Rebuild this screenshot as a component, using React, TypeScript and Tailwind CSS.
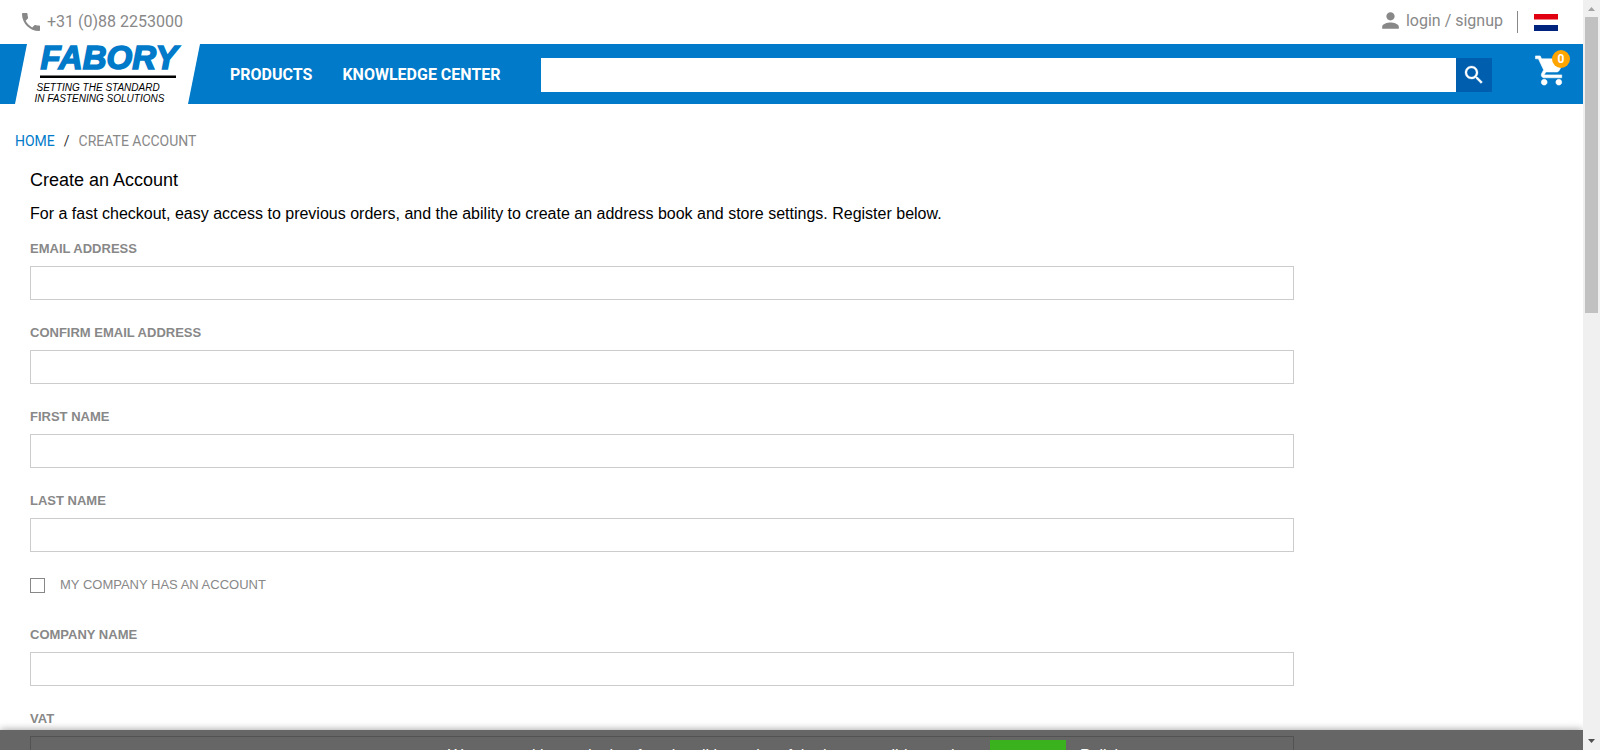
import { useId } from "react";

function Field({ label, type = "text" }: { label: string; type?: string }) {
  const id = useId();
  return (
    <div className="mb-6">
      <label htmlFor={id} className="mb-2 block text-[13px] font-bold leading-[18px] text-[#888] uppercase">
        {label}
      </label>
      <input
        id={id}
        type={type}
        className="block h-[34px] w-full border border-[#ccc] bg-white px-2 text-sm text-black outline-none"
      />
    </div>
  );
}

function Logo() {
  return (
    <a href="#home" aria-label="Fabory home" className="block shrink-0">
      <svg width="200" height="60" viewBox="0 0 200 60" className="block">
        <polygon points="27,0 200,0 188,60 15,60" fill="#fff" />
        <text
          x="40.500"
          y="24.5"
          fontFamily="Liberation Sans, Arial, sans-serif"
          fontWeight="700"
          fontStyle="italic"
          fontSize="33"
          fill="#007ac9"
          stroke="#007ac9"
          strokeWidth="1.600"
        >
          FABORY
        </text>
        <rect x="40" y="31.500" width="136" height="2.500" fill="#000" />
        <text x="36.500" y="47" fontFamily="Liberation Sans, Arial, sans-serif" fontStyle="italic" fontSize="10" fill="#000">
          SETTING THE STANDARD
        </text>
        <text x="34.500" y="58" fontFamily="Liberation Sans, Arial, sans-serif" fontStyle="italic" fontSize="10" fill="#000">
          IN FASTENING SOLUTIONS
        </text>
      </svg>
    </a>
  );
}

function TopBar() {
  return (
    <div className="flex h-11 items-center justify-between pr-[25px] pl-[19px] font-[Roboto,sans-serif] text-base text-[#888]">
      <a href="tel:+31882253000" className="flex items-center gap-1">
        <svg width="24" height="24" viewBox="0 0 24 24" fill="#888">
          <path d="M6.62 10.79c1.44 2.83 3.76 5.14 6.59 6.59l2.2-2.2c.27-.27.67-.36 1.02-.24 1.12.37 2.33.57 3.57.57.55 0 1 .45 1 1V20c0 .55-.45 1-1 1-9.39 0-17-7.61-17-17 0-.55.45-1 1-1h3.5c.55 0 1 .45 1 1 0 1.25.2 2.45.57 3.57.11.35.03.74-.25 1.02l-2.2 2.2z" />
        </svg>
        +31 (0)88 2253000
      </a>
      <div className="flex items-center">
        <a href="#login" className="flex items-center gap-[3px] pb-[3px]">
          <svg width="25" height="25" viewBox="0 0 24 24" fill="#888">
            <path d="M12 12c2.21 0 4-1.79 4-4s-1.79-4-4-4-4 1.79-4 4 1.79 4 4 4zm0 2c-2.67 0-8 1.34-8 4v2h16v-2c0-2.66-5.33-4-8-4z" />
          </svg>
          login / signup
        </a>
        <span className="mr-4 ml-[14px] h-[22px] w-px bg-[#888]" />
        <button type="button" aria-label="Language: Dutch">
          <svg width="24" height="17" viewBox="0 0 24 17" className="block">
            <rect width="24" height="17" fill="#fff" />
            <rect width="24" height="5.500" fill="#e1000f" />
            <rect y="11" width="24" height="6" fill="#00247d" />
          </svg>
        </button>
      </div>
    </div>
  );
}

function NavBar() {
  return (
    <header className="flex h-[60px] bg-[#007ac9] font-[Roboto,sans-serif]">
      <Logo />
      <div className="flex min-w-0 flex-1 items-center pt-0.5">
        <nav className="ml-[30px] flex shrink-0 gap-[30px] text-base font-bold text-white">
          <a href="#products">PRODUCTS</a>
          <a href="#knowledge">KNOWLEDGE CENTER</a>
        </nav>
        <form role="search" className="ml-10 flex h-[34px] min-w-0 flex-1" onSubmit={(e) => e.preventDefault()}>
          <input type="search" aria-label="Search" className="min-w-0 flex-1 bg-white px-3 text-base outline-none" />
          <button type="submit" aria-label="Search" className="flex w-9 items-center justify-center bg-[#005eae]">
            <svg width="24" height="24" viewBox="0 0 24 24" fill="#fff" stroke="#fff" strokeWidth="0.300">
              <path d="M15.5 14h-.79l-.28-.27C15.41 12.59 16 11.11 16 9.5 16 5.91 13.09 3 9.5 3S3 5.91 3 9.5 5.91 16 9.5 16c1.61 0 3.09-.59 4.23-1.57l.27.28v.79l5 4.99L20.49 19l-4.99-5zm-6 0C7.01 14 5 11.99 5 9.5S7.01 5 9.5 5 14 7.01 14 9.5 11.99 14 9.5 14z" />
            </svg>
          </button>
        </form>
      </div>
      <a href="#cart" aria-label="Shopping cart" className="relative mt-[9px] mr-[14px] ml-[42px] block size-[35px] shrink-0">
        <svg width="35" height="35" viewBox="0 0 24 24" fill="#fff" stroke="#fff" strokeWidth="0.400">
          <path d="M7 18c-1.1 0-1.99.9-1.99 2S5.900 22 7 22s2-.9 2-2-.9-2-2-2zM1 2v2h2l3.600 7.590-1.350 2.450c-.160.280-.250.610-.250.960 0 1.100.900 2 2 2h12v-2H7.420c-.140 0-.250-.110-.250-.250l.030-.120.900-1.630h7.450c.750 0 1.410-.410 1.750-1.030l3.580-6.490c.080-.140.120-.310.120-.480 0-.550-.450-1-1-1H5.210l-.940-2H1zm16 16c-1.100 0-1.990.900-1.990 2s.890 2 1.990 2 2-.900 2-2-.900-2-2-2z" />
        </svg>
        <span className="absolute -top-[3px] left-[18px] flex size-[18px] items-center justify-center rounded-full bg-[#ffa500] text-xs leading-none font-bold text-white">
          0
        </span>
      </a>
    </header>
  );
}

function CookieBar() {
  return (
    <div className="absolute inset-x-0 top-[calc(100%-20px)] flex h-[60px] justify-center gap-[14px] bg-black/60 pt-[10px] text-base leading-8 text-white shadow-[0_0_8px_rgba(0,0,0,0.4)]">
      <p>We use cookies and other functionalities to be of the best possible service.</p>
      <button type="button" className="h-[34px] w-[76px] bg-[#39b21d]">
        Accept
      </button>
      <a href="#policies">Policies</a>
    </div>
  );
}

function Scrollbar() {
  return (
    <div aria-hidden="true" className="flex w-[17px] shrink-0 flex-col items-center bg-[#f0f0f0]">
      <svg width="17" height="17" viewBox="0 0 17 17" className="shrink-0">
        <path d="M5 11h7L8.500 7z" fill="#a3a3a3" />
      </svg>
      <div className="h-[296px] w-[13px] shrink-0 bg-[#c1c1c1]" />
      <svg width="17" height="17" viewBox="0 0 17 17" className="mt-auto shrink-0">
        <path d="M5 6h7L8.500 10z" fill="#505050" />
      </svg>
    </div>
  );
}

export default function App() {
  return (
    <div className="flex h-screen overflow-hidden bg-white font-['Liberation_Sans',Arial,sans-serif]">
      <div className="relative min-w-0 flex-1 overflow-hidden">
        <TopBar />
        <NavBar />
        <main className="px-[15px]">
          <nav aria-label="Breadcrumb" className="flex gap-[9px] pt-7 font-[Roboto,sans-serif] text-sm leading-[18px]">
            <a href="#home" className="text-[#007ac9]">HOME</a>
            <span className="text-[#333]">/</span>
            <span className="text-[#888]">CREATE ACCOUNT</span>
          </nav>
          <form className="w-5/6 px-[15px] pt-[18px]">
            <h1 className="text-lg leading-6">Create an Account</h1>
            <p className="mt-[10px] mb-[14px] text-base leading-6">
              For a fast checkout, easy access to previous orders, and the ability to create an address book and store settings. Register below.
            </p>
            <Field label="Email address" type="email" />
            <Field label="Confirm email address" type="email" />
            <Field label="First name" />
            <Field label="Last name" />
            <label className="mb-8 flex h-[18px] items-center gap-[15px] text-[13px] text-[#888]">
              <input type="checkbox" className="size-[15px] appearance-none border border-[#888] bg-white checked:bg-[#007ac9]" />
              MY COMPANY HAS AN ACCOUNT
            </label>
            <Field label="Company name" />
            <Field label="VAT" />
          </form>
        </main>
        <CookieBar />
      </div>
      <Scrollbar />
    </div>
  );
}
